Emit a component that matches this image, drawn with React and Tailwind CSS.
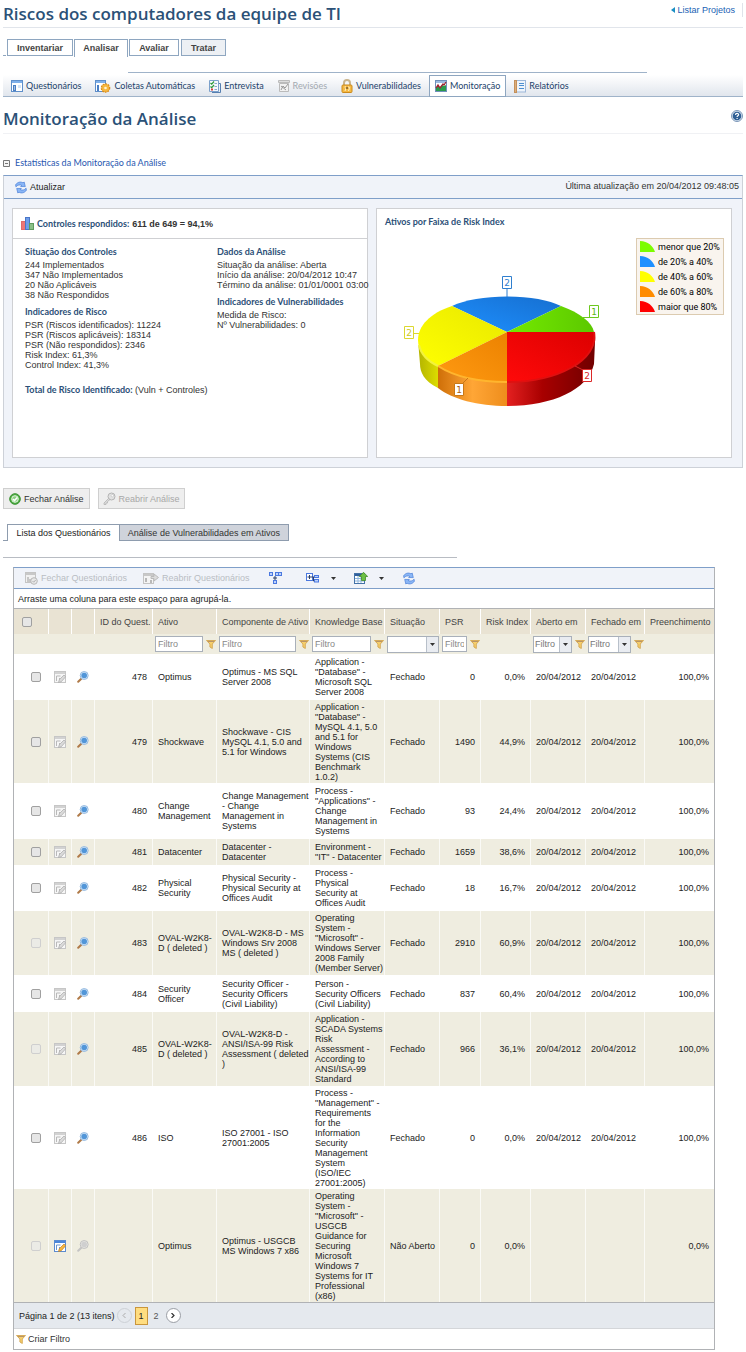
// Monitoração da Análise - project risk page (statistics + questionnaire grid)
import { useState } from 'react';

const OPEN = 'font-["Open_Sans",sans-serif]';
const LATO = 'font-["Lato",sans-serif]';

const controles = ['244 Implementados', '347 Não Implementados', '20 Não Aplicáveis', '38 Não Respondidos'];
const indicadores = [
  'PSR (Riscos identificados): 11224',
  'PSR (Riscos aplicáveis): 18314',
  'PSR (Não respondidos): 2346',
  'Risk Index: 61,3%',
  'Control Index: 41,3%',
];
const dadosAnalise = ['Situação da análise: Aberta', 'Início da análise: 20/04/2012 10:47', 'Término da análise: 01/01/0001 03:00'];
const vulnerabilidades = ['Medida de Risco:', 'Nº Vulnerabilidades: 0'];

const faixas = [
  { label: 'menor que 20%', color: '#7cfc00' },
  { label: 'de 20% a 40%', color: '#1e90ff' },
  { label: 'de 40% a 60%', color: '#ffff00' },
  { label: 'de 60% a 80%', color: '#ff8c00' },
  { label: 'maior que 80%', color: '#ff0000' },
];

const D = '20/04/2012';
const questionarios = [
  { id: '478', ativo: ['Optimus'], comp: ['Optimus - MS SQL', 'Server 2008'], kb: ['Application -', '"Database" -', 'Microsoft SQL', 'Server 2008'], psr: '0', risk: '0,0%', h: 'h-[46px]' },
  { id: '479', ativo: ['Shockwave'], comp: ['Shockwave - CIS', 'MySQL 4.1, 5.0 and', '5.1 for Windows'], kb: ['Application -', '"Database" -', 'MySQL 4.1, 5.0', 'and 5.1 for', 'Windows', 'Systems (CIS', 'Benchmark', '1.0.2)'], psr: '1490', risk: '44,9%', h: 'h-[83px]' },
  { id: '480', ativo: ['Change', 'Management'], comp: ['Change Management', '- Change', 'Management in', 'Systems'], kb: ['Process -', '"Applications" -', 'Change', 'Management in', 'Systems'], psr: '93', risk: '24,4%', h: 'h-[56px]' },
  { id: '481', ativo: ['Datacenter'], comp: ['Datacenter -', 'Datacenter'], kb: ['Environment -', '"IT" - Datacenter'], psr: '1659', risk: '38,6%', h: 'h-[26px]' },
  { id: '482', ativo: ['Physical', 'Security'], comp: ['Physical Security -', 'Physical Security at', 'Offices Audit'], kb: ['Process -', 'Physical', 'Security at', 'Offices Audit'], psr: '18', risk: '16,7%', h: 'h-[46px]' },
  { id: '483', ativo: ['OVAL-W2K8-', 'D ( deleted )'], comp: ['OVAL-W2K8-D - MS', 'Windows Srv 2008', 'MS ( deleted )'], kb: ['Operating', 'System -', '"Microsoft" -', 'Windows Server', '2008 Family', '(Member Server)'], psr: '2910', risk: '60,9%', h: 'h-[64px]', locked: true },
  { id: '484', ativo: ['Security', 'Officer'], comp: ['Security Officer -', 'Security Officers', '(Civil Liability)'], kb: ['Person -', 'Security Officers', '(Civil Liability)'], psr: '837', risk: '60,4%', h: 'h-[37px]' },
  { id: '485', ativo: ['OVAL-W2K8-', 'D ( deleted )'], comp: ['OVAL-W2K8-D -', 'ANSI/ISA-99 Risk', 'Assessment ( deleted', ')'], kb: ['Application -', 'SCADA Systems', 'Risk', 'Assessment -', 'According to', 'ANSI/ISA-99', 'Standard'], psr: '966', risk: '36,1%', h: 'h-[74px]', locked: true },
  { id: '486', ativo: ['ISO'], comp: ['ISO 27001 - ISO', '27001:2005'], kb: ['Process -', '"Management" -', 'Requirements', 'for the', 'Information', 'Security', 'Management', 'System', '(ISO/IEC', '27001:2005)'], psr: '0', risk: '0,0%', h: 'h-[103px]' },
  { id: '', ativo: ['Optimus'], comp: ['Optimus - USGCB', 'MS Windows 7 x86'], kb: ['Operating', 'System -', '"Microsoft" -', 'USGCB', 'Guidance for', 'Securing', 'Microsoft', 'Windows 7', 'Systems for IT', 'Professional', '(x86)'], psr: '0', risk: '0,0%', h: 'h-[113px]', locked: true, aberto: true },
];

/* ---------- icons ---------- */

function FormIcon() {
  return (
    <svg width="12" height="12" viewBox="0 0 12 12">
      <rect x="0.5" y="0.5" width="11" height="11" fill="#fff" stroke="#5f8fca" />
      <rect x="1" y="1" width="10" height="2" fill="#7fb0ea" />
      <rect x="2" y="5" width="3" height="6" fill="#4a7fc4" />
      <rect x="7" y="5" width="3" height="3" fill="#d5e4f6" />
      <path d="M3 7h1M3 9h1" stroke="#fff" />
    </svg>
  );
}

function FormGearIcon() {
  return (
    <svg width="16" height="13" viewBox="0 0 16 13">
      <rect x="0.5" y="0.5" width="10" height="11" fill="#fff" stroke="#5f8fca" />
      <rect x="1" y="1" width="9" height="2" fill="#7fb0ea" />
      <rect x="2" y="5" width="2" height="6" fill="#4a7fc4" />
      <circle cx="10.5" cy="8" r="4" fill="#f0a830" stroke="#d88a18" strokeDasharray="1.6 1" strokeWidth="1.6" />
      <circle cx="10.5" cy="8" r="3.4" fill="#f6b840" />
      <circle cx="10.5" cy="8" r="1.3" fill="#fff3d4" />
    </svg>
  );
}

function ChecklistIcon() {
  return (
    <svg width="12" height="13" viewBox="0 0 12 13">
      <path d="M10 3.500h1.500v9H3" fill="none" stroke="#567fb0" />
      <path d="M.5.500h9v11h-9z" fill="#f4f8fd" stroke="#7ba0cb" />
      <path d="M1.500 3l1.200 1.200L5 1.500M1.500 6.500l1.200 1.200L5 5" fill="none" stroke="#2f9a3c" strokeWidth="1.200" />
      <path d="M2 8.500h2v2H2z" fill="#d23c3c" />
      <path d="M5.500 3.500H8M5.500 6.500H8M5.500 9.500H8" stroke="#8aa6c8" />
    </svg>
  );
}

function ReviewIcon() {
  return (
    <svg width="12" height="12" viewBox="0 0 12 12">
      <path d="M.5.500h11v2H.5z" fill="#ddd" stroke="#bbb" />
      <path d="M1.500 3.500h9v8h-9z" fill="#f2f2f2" stroke="#bbb" />
      <path d="M3 10l2-4 2 2 3-4M3 6l5 4" fill="none" stroke="#999" />
    </svg>
  );
}

function LockIcon() {
  return (
    <svg width="12" height="14" viewBox="0 0 12 14">
      <path d="M3 7V4a3 3 0 0 1 6 0v3" fill="none" stroke="#c9b48c" strokeWidth="2" />
      <rect x="1" y="6" width="10" height="7.500" rx="1" fill="#f5b942" stroke="#cb8a1d" />
      <path d="M3.500 8c.8-1 2 0 1.600 1L4 12M7 8c1.500-.5 2 .6 1.400 1.500L7.500 12" fill="none" stroke="#fff1c9" />
      <circle cx="6" cy="9" r="1" fill="#7b5a22" />
    </svg>
  );
}

function MonitorIcon() {
  return (
    <svg width="12" height="12" viewBox="0 0 12 12">
      <rect x="0.5" y="0.5" width="11" height="11" fill="#fff" stroke="#6f8fba" />
      <rect x="1" y="1" width="10" height="2" fill="#9dbce2" />
      <path d="M1 11V8l2-2 2 2 2-3 2 1 2-1v6z" fill="#2a9a4c" />
      <path d="M1 8l2-3 2 3 3-4 1 1 2-3" fill="none" stroke="#9c2330" strokeWidth="1.300" />
    </svg>
  );
}

function NotebookIcon() {
  return (
    <svg width="12" height="13" viewBox="0 0 12 13">
      <rect x="2.500" y="0.500" width="9" height="11.500" fill="#eef4fb" stroke="#9db7d8" />
      <rect x="0.500" y="0.500" width="2" height="12" fill="#dcae7c" stroke="#c4905a" />
      <path d="M5 3.500h5M5 5.500h5M5 8.500h5" stroke="#4d8fd0" />
    </svg>
  );
}

function HelpIcon() {
  return (
    <svg width="12" height="12" viewBox="0 0 12 12">
      <circle cx="6" cy="6" r="5.500" fill="#dbe6f2" stroke="#7d98b8" />
      <circle cx="6" cy="6" r="4.300" fill="#2f5f94" />
      <path d="M4.500 4.900c0-2 3.100-1.900 3.100-.2 0 1.100-1.500 1.100-1.500 2.200M6.100 8v1.100" fill="none" stroke="#fff" strokeWidth="1.200" />
    </svg>
  );
}

function RefreshIcon() {
  return (
    <svg width="12" height="13" viewBox="0 0 12 13">
      <g fill="#8ab6f6" stroke="#4a7fd8" strokeWidth=".7" strokeLinejoin="round">
        <path d="M.6 3.800C2.500 1 5.500.4 8 1.800L9.200 1 10.300 5.600 5.600 5.500 6.800 4.400C4.800 3.500 2.800 3.800.9 5.800z" />
        <path d="M11.400 9.200C9.500 12 6.500 12.600 4 11.200L2.800 12 1.700 7.400 6.400 7.500 5.200 8.600C7.200 9.500 9.200 9.200 11.100 7.200z" />
      </g>
    </svg>
  );
}

function BarsIcon() {
  return (
    <svg width="13" height="13" viewBox="0 0 13 13">
      <rect x="0.500" y="4.500" width="4" height="8" fill="#ef7676" stroke="#e06a6a" />
      <rect x="4.500" y="0.500" width="4" height="12" fill="#6f9de8" stroke="#4a76c8" />
      <rect x="8.500" y="6.500" width="4" height="6" fill="#8abf86" stroke="#5f9a5d" />
    </svg>
  );
}

function CheckCircleIcon() {
  return (
    <svg width="12" height="12" viewBox="0 0 12 12">
      <circle cx="6" cy="6" r="5.300" fill="#4fae45" stroke="#38902f" />
      <circle cx="6" cy="6" r="3.300" fill="#8ed184" stroke="#e5f6e2" />
      <path d="M3.900 6l1.600 1.600 2.800-3.100" fill="none" stroke="#fff" strokeWidth="1.500" />
    </svg>
  );
}

function KeyIcon() {
  return (
    <svg width="13" height="13" viewBox="0 0 13 13">
      <circle cx="8.500" cy="4.500" r="3.500" fill="#e2e2e2" stroke="#b4b4b4" />
      <circle cx="9.300" cy="3.700" r="1.200" fill="#fff" stroke="#bbb" strokeWidth=".6" />
      <path d="M5.500 6.500L1 11v1.500h2V11h1.500V9.500L7 7.500z" fill="#dcdcdc" stroke="#b4b4b4" strokeWidth=".8" />
    </svg>
  );
}

function CloseFormIcon() {
  return (
    <svg width="13" height="13" viewBox="0 0 13 13">
      <rect x="0.500" y="0.500" width="10" height="10" fill="#f1f1f1" stroke="#c4c4c4" />
      <path d="M1 2h9" stroke="#c8c8c8" strokeWidth="2" />
      <path d="M3 5v5M5 7v3" stroke="#b8b8b8" strokeWidth="1.500" />
      <circle cx="9" cy="9" r="3.300" fill="#e8e8e8" stroke="#b8b8b8" />
      <path d="M7.500 9l1.200 1.200 2-2.200" fill="none" stroke="#b0b0b0" />
    </svg>
  );
}

function ReopenFormIcon() {
  return (
    <svg width="16" height="12" viewBox="0 0 16 12">
      <rect x="0.500" y="1.500" width="10" height="10" fill="#f4f4f4" stroke="#c4c4c4" />
      <path d="M1 3h9" stroke="#c8c8c8" strokeWidth="2" />
      <path d="M3 6v4M8 8v3" stroke="#b8b8b8" strokeWidth="2" />
      <path d="M8 4.500h3V2l4.500 3.500L11 9V6.500H8z" fill="#dcdcdc" stroke="#bababa" />
    </svg>
  );
}

function TreeIcon() {
  return (
    <svg width="13" height="13" viewBox="0 0 13 13">
      <path d="M6 4v4.500M4 6h4" fill="none" stroke="#2c3f66" />
      <g fill="#bcd2fb" stroke="#4a78e0">
        <rect x="0.500" y="0.500" width="3" height="3" />
        <rect x="6.500" y="0.500" width="3" height="3" />
        <rect x="9.500" y="0.500" width="3" height="3" />
        <rect x="4.500" y="8.500" width="3" height="3" />
      </g>
    </svg>
  );
}

function ExpandIcon() {
  return (
    <svg width="13" height="10" viewBox="0 0 13 10">
      <rect x="0.500" y="0.500" width="6" height="7" fill="#fff" stroke="#4a78e0" />
      <path d="M1.500 4h7M3.500 2v4M7.500 4v4h1" fill="none" stroke="#2c3f66" />
      <rect x="8.500" y="2.500" width="4" height="2" fill="#bcd2fb" stroke="#4a78e0" />
      <rect x="8.500" y="6.500" width="4" height="2.500" fill="#bcd2fb" stroke="#4a78e0" />
    </svg>
  );
}

function ExportIcon() {
  return (
    <svg width="14" height="12" viewBox="0 0 14 12">
      <rect x="0.500" y="1.500" width="10" height="10" fill="#fff" stroke="#4472a8" />
      <path d="M1 3h9" stroke="#2f5f9c" strokeWidth="2" />
      <path d="M1 6.500h9M1 9h9M4 4v7M7 4v7" stroke="#8db4dc" />
      <path d="M9.500.3L13.700 4.500H11.500v4h-4v-4H5.300z" fill="#6cc044" stroke="#3f8a2a" strokeWidth=".8" />
    </svg>
  );
}

function CaretIcon() {
  return (
    <svg width="5" height="3" viewBox="0 0 5 3">
      <path d="M0 0h5L2.500 3z" fill="#333" />
    </svg>
  );
}

function FunnelIcon() {
  return (
    <svg width="10" height="9" viewBox="0 0 10 9" className="shrink-0">
      <path d="M.5.500h9L6.300 4v4.500L3.900 7V4z" fill="#f6cf6c" stroke="#cf9f48" strokeWidth=".8" />
      <path d="M2 1.500h6" stroke="#b89468" />
    </svg>
  );
}

function EditIcon({ active }) {
  return (
    <svg width="12" height="12" viewBox="0 0 12 12" className="mx-auto">
      <rect x="0.500" y="0.500" width="11" height="11" fill={active ? '#fff' : '#f6f6f6'} stroke={active ? '#5b8bd0' : '#c6c6c6'} />
      <path d="M1 2h10" stroke={active ? '#4b86da' : '#d2d2d2'} strokeWidth="2" />
      <path d="M2.500 5h4M2.500 10V5M5.500 10V7" stroke={active ? '#6a95cf' : '#b9b9b9'} />
      <path d="M4.500 11.500l.8-2.800L10 4l1.700 1.700L7.300 10.700z" fill={active ? '#f6b640' : '#dadada'} stroke={active ? '#c07f20' : '#a9a9a9'} strokeWidth=".7" />
    </svg>
  );
}

function MagnifierIcon({ disabled }) {
  return (
    <svg width="12" height="12" viewBox="0 0 12 12" className="mx-auto">
      <path d="M1.200 10.800L4.800 7.200" stroke={disabled ? '#c4c4c4' : '#b07a48'} strokeWidth="2" strokeLinecap="round" />
      <circle cx="7.200" cy="4.500" r="4" fill={disabled ? '#e4e4e0' : '#d3e6f8'} stroke={disabled ? '#bdbdbd' : '#8db4dc'} strokeWidth=".9" />
      <circle cx="7.200" cy="4.500" r="2.800" fill={disabled ? '#cfcfcf' : '#5296d8'} />
    </svg>
  );
}

/* ---------- chart ---------- */

function RiskPie() {
  return (
    <svg width="200" height="136" viewBox="400 274 200 136" role="img" aria-label="Ativos por Faixa de Risk Index">
      <defs>
        <linearGradient id="sideRed" x1="0" x2="1">
          <stop offset="0" stopColor="#e42020" />
          <stop offset=".4" stopColor="#a80000" />
          <stop offset="1" stopColor="#700000" />
        </linearGradient>
        <linearGradient id="sideOrange" x1="0" x2="1">
          <stop offset="0" stopColor="#cf6f08" />
          <stop offset=".5" stopColor="#ffa636" />
          <stop offset="1" stopColor="#ee8d1c" />
        </linearGradient>
        <linearGradient id="sideYellow" x1="0" x2="1">
          <stop offset="0" stopColor="#b3b300" />
          <stop offset="1" stopColor="#dcdc00" />
        </linearGradient>
        <linearGradient id="topBlue" x1="0" y1="1" x2="1" y2="0">
          <stop offset="0" stopColor="#1e90ff" />
          <stop offset="1" stopColor="#166fd0" />
        </linearGradient>
        <linearGradient id="topGreen" x1="0" x2="1">
          <stop offset="0" stopColor="#74ea00" />
          <stop offset="1" stopColor="#5cc800" />
        </linearGradient>
        <linearGradient id="topYellow" x1="0" y1="1" x2="1" y2="0">
          <stop offset="0" stopColor="#ffff00" />
          <stop offset="1" stopColor="#e8e800" />
        </linearGradient>
        <linearGradient id="topOrange" x1="0" y1="1" x2="1" y2="0">
          <stop offset="0" stopColor="#ff9a12" />
          <stop offset="1" stopColor="#ec8200" />
        </linearGradient>
        <linearGradient id="topRed" x1="0" y1="1" x2="1" y2="0">
          <stop offset="0" stopColor="#ff0a0a" />
          <stop offset="1" stopColor="#dc0000" />
        </linearGradient>
      </defs>
      <path d="M418 340C418 350 424 360 438 366V388C424 381 420 372 420 364z" fill="url(#sideYellow)" />
      <path d="M438 366C455 377 480 382 507 382V406C478 406 452 399 438 388z" fill="url(#sideOrange)" />
      <path d="M507 380C545 378 590 362 593 332C595 334 595.500 337 595 342L594 364C588 390 552 406 507 406z" fill="url(#sideRed)" />
      <path d="M507 332L452 306C465 300 485 296.500 507 296.500S549 300 561 306z" fill="url(#topBlue)" />
      <path d="M507 332L561 306C580 313 592 322 594 332z" fill="url(#topGreen)" />
      <path d="M507 332L452 306C430 313 418 326 418 340C418 350 425 359 438 366z" fill="url(#topYellow)" />
      <path d="M507 332L438 366C455 377 480 382 507 382z" fill="url(#topOrange)" />
      <path d="M507 332H594C599 360 558 382 507 382z" fill="url(#topRed)" />
      <path d="M438 366C455 377 480 382 507 382" fill="none" stroke="#ffb52e" strokeWidth="2" />
      <path d="M507 382C558 382 599 360 594 332" fill="none" stroke="#e01010" strokeWidth="2" />
      <path d="M419 345C421 354 427 361 438 366" fill="none" stroke="#f2f23c" strokeWidth="2" />
      <g fill="#fff">
        <path d="M507 289v8M502.500 276.500h9v12h-9z" stroke="#2f7fcf" />
        <path d="M583 317.500h7M589.500 305.500h9v12h-9z" stroke="#6cc81e" />
        <path d="M413 333.500h6M404.500 326.500h9v12h-9z" stroke="#dcd830" />
        <path d="M463 383l5-5M454.500 383.500h9v12h-9z" stroke="#c87818" />
        <path d="M575 366l8 4M582.500 369.500h9v12h-9z" stroke="#dc2828" />
      </g>
      <g fontFamily="DejaVu Sans, sans-serif" fontSize="9" textAnchor="middle">
        <text x="507" y="286" fill="#2f7fcf">2</text>
        <text x="594" y="315" fill="#5cb812">1</text>
        <text x="409" y="336" fill="#cfca20">2</text>
        <text x="459" y="393" fill="#a86010">1</text>
        <text x="587" y="379" fill="#dc2828">2</text>
      </g>
    </svg>
  );
}

/* ---------- pieces ---------- */

function MenuItem({ icon, label, active, disabled }) {
  const tone = active ? 'border-[#8ea6c0] bg-white' : 'border-transparent';
  return (
    <button
      disabled={disabled}
      className={`flex h-[22px] items-center gap-[3px] border px-[5px] whitespace-nowrap ${tone} ${disabled ? 'text-[#a3a9b0]' : 'text-[#1d436b]'}`}
    >
      {icon}
      {label}
    </button>
  );
}

function StatBlock({ title, lines }) {
  return (
    <section className="mb-[4px]">
      <h3 className={`${LATO} text-[9px] leading-[16px] font-bold text-[#2b4f77]`}>{title}</h3>
      {lines.map(l => <p key={l} className="leading-[10px] whitespace-nowrap">{l}</p>)}
    </section>
  );
}

function FilterInput({ label }) {
  return (
    <div className="flex items-center gap-[3px] pl-[2px] pr-px">
      <input aria-label={label} placeholder="Filtro" className="h-[16px] w-full min-w-0 border border-[#a9b0ba] bg-white px-[2px] text-[9px] placeholder:text-[#888]" />
      <FunnelIcon />
    </div>
  );
}

function FilterSelect({ label, text, funnel }) {
  return (
    <div className="flex items-center gap-[3px] pl-[2px] pr-px">
      <div className="relative h-[17px] w-full min-w-0">
        <select aria-label={label} className="block h-full w-full appearance-none border border-[#a9b0ba] bg-white pl-px text-[9px] text-[#777]">
          <option>{text}</option>
        </select>
        <span className="pointer-events-none absolute inset-y-px right-px flex w-[12px] items-center justify-center border-l border-[#b8c0ca] bg-[#e9ecf1]">
          <CaretIcon />
        </span>
      </div>
      {funnel && <FunnelIcon />}
    </div>
  );
}

function Lines({ items }) {
  return items.map(t => <span key={t} className="block whitespace-nowrap">{t}</span>);
}

const CHECK = 'block size-[10px] appearance-none rounded-xs border border-[#a0a0a0] bg-[#e6e6e6] checked:bg-[#4b86da] disabled:border-[#cfcfcf] disabled:bg-[#ebebe6]';
const TH = 'border-r border-white px-[5px] font-normal whitespace-nowrap last:border-r-0';
const TD = 'border-r border-white/70 pl-[5px] pr-0 last:border-r-0';
const TDR = 'border-r border-white/70 px-[5px] text-right last:border-r-0';

function Grid() {
  const [marcados, setMarcados] = useState([]);

  function toggle(i) {
    setMarcados(prev => prev.includes(i) ? prev.filter(x => x !== i) : [...prev, i]);
  }

  return (
    <table className="w-full table-fixed border-separate border-spacing-0 text-left text-[9px] leading-[10px] text-[#222]">
      <colgroup>
        <col className="w-[35px]" />
        <col className="w-[23px]" />
        <col className="w-[23px]" />
        <col className="w-[58px]" />
        <col className="w-[64px]" />
        <col className="w-[93px]" />
        <col className="w-[75px]" />
        <col className="w-[55px]" />
        <col className="w-[41px]" />
        <col className="w-[50px]" />
        <col className="w-[55px]" />
        <col className="w-[59px]" />
        <col />
      </colgroup>
      <thead>
        <tr className="h-[25px] bg-[#e9e3d3] text-[#444]">
          <th className={TH}><input type="checkbox" aria-label="Selecionar todos" className={`${CHECK} ml-[3px]`} /></th>
          <th className={TH} />
          <th className={TH} />
          <th className={`${TH} text-right`}>ID do Quest.</th>
          <th className={TH}>Ativo</th>
          <th className={TH}>Componente de Ativo</th>
          <th className={TH}>Knowledge Base</th>
          <th className={TH}>Situação</th>
          <th className={TH}>PSR</th>
          <th className={`${TH} text-right`}>Risk Index</th>
          <th className={TH}>Aberto em</th>
          <th className={TH}>Fechado em</th>
          <th className={`${TH} text-right`}>Preenchimento</th>
        </tr>
        <tr className="h-[20px] bg-[#efede0]">
          <td colSpan={4} />
          <td><FilterInput label="Filtro de Ativo" /></td>
          <td><FilterInput label="Filtro de Componente de Ativo" /></td>
          <td><FilterInput label="Filtro de Knowledge Base" /></td>
          <td><FilterSelect label="Filtro de Situação" text="" /></td>
          <td><FilterInput label="Filtro de PSR" /></td>
          <td />
          <td><FilterSelect label="Filtro de Aberto em" text="Filtro" funnel /></td>
          <td><FilterSelect label="Filtro de Fechado em" text="Filtro" funnel /></td>
          <td />
        </tr>
      </thead>
      <tbody>
        {questionarios.map((q, i) => (
          <tr key={i} className={`${q.h} odd:bg-white even:bg-[#efede0]`}>
            <td className={TD}>
              <input type="checkbox" aria-label={`Selecionar ${q.id}`} disabled={q.locked} checked={marcados.includes(i)} onChange={() => toggle(i)} className={`${CHECK} ml-[12px]`} />
            </td>
            <td className="border-r border-white/70"><EditIcon active={q.aberto} /></td>
            <td className="border-r border-white/70"><MagnifierIcon disabled={q.aberto} /></td>
            <td className={TDR}>{q.id}</td>
            <td className={TD}><Lines items={q.ativo} /></td>
            <td className={TD}><Lines items={q.comp} /></td>
            <td className={TD}><Lines items={q.kb} /></td>
            <td className={TD}>{q.aberto ? 'Não Aberto' : 'Fechado'}</td>
            <td className={TDR}>{q.psr}</td>
            <td className={TDR}>{q.risk}</td>
            <td className={TD}>{q.aberto ? '' : D}</td>
            <td className={TD}>{q.aberto ? '' : D}</td>
            <td className={TDR}>{q.aberto ? '0,0%' : '100,0%'}</td>
          </tr>
        ))}
      </tbody>
    </table>
  );
}

export default function App() {
  return (
    <div className='bg-white px-[3px] pb-[2px] font-["Liberation_Sans",Arial,sans-serif] text-[9px] leading-[12px] text-[#333]'>
      <header className="flex h-[28px] items-center justify-between border-b border-[#e1e5eb]">
        <h1 className={`${OPEN} text-[17px] leading-[26px] font-semibold text-[#2b5177]`}>Riscos dos computadores da equipe de TI</h1>
        <div className="mb-[8px] flex h-[14px] items-center border-r border-[#dfe3ea] pr-[7px]">
          <a href="#projetos" className="flex items-center gap-[2px] text-[#1a5fb4]">
            <svg width="4" height="6" viewBox="0 0 4 6"><path d="M4 0v6L0 3z" fill="#1b8fc4" /></svg>
            Listar Projetos
          </a>
        </div>
      </header>

      <nav className="mt-[11px] flex h-[18px] items-start gap-px font-bold text-[#444]">
        <span className="h-[17px] w-[3px] border-b border-[#8ea6c0]" />
        <button className="h-[17px] w-[66px] border border-[#8ea6c0]">Inventariar</button>
        <button className="h-[18px] w-[54px] border border-b-0 border-[#8ea6c0] pb-[2px]">Analisar</button>
        <button className="h-[17px] w-[50px] border border-[#8ea6c0]">Avaliar</button>
        <button className="ml-px h-[17px] w-[45px] border border-[#8ea6c0] bg-[#edf0f4]">Tratar</button>
      </nav>

      <div className="mt-[15px] mr-[13%] ml-[125px] border-t border-[#9fb3c9]" />
      <nav className={`${LATO} mt-[2px] flex h-[22px] gap-[2px] border-b border-[#9fb3c9] bg-linear-to-b from-white to-[#e1e6ed] pl-[2px] text-[9px]`}>
        <MenuItem icon={<FormIcon />} label="Questionários" />
        <MenuItem icon={<FormGearIcon />} label="Coletas Automáticas" />
        <MenuItem icon={<ChecklistIcon />} label="Entrevista" />
        <MenuItem icon={<ReviewIcon />} label="Revisões" disabled />
        <MenuItem icon={<LockIcon />} label="Vulnerabilidades" />
        <MenuItem icon={<MonitorIcon />} label="Monitoração" active />
        <MenuItem icon={<NotebookIcon />} label="Relatórios" />
      </nav>

      <div className="mt-[8px] flex h-[29px] items-center justify-between border-b border-[#f0f1f4]">
        <h2 className={`${OPEN} text-[17px] leading-[26px] font-semibold text-[#2b5177]`}>Monitoração da Análise</h2>
        <button aria-label="Ajuda" className="mb-[6px]"><HelpIcon /></button>
      </div>

      <button className={`${LATO} mt-[22px] flex h-[14px] items-center gap-[5px] text-[#2858b0]`}>
        <svg width="7" height="7" viewBox="0 0 7 7"><path d="M.5.500h6v6h-6zM2 3.500h3" fill="#f4f4f4" stroke="#777" /></svg>
        Estatísticas da Monitoração da Análise
      </button>

      <section className="mt-[5px] border border-[#cdd1d8] border-t-[#7f9fc9] bg-[#f0f3f9]">
        <div className="flex h-[23px] items-center justify-between border-b border-[#7f9fc9] pr-[3px] pl-[11px]">
          <button className="flex items-center gap-[3px] text-[#222]"><RefreshIcon /> Atualizar</button>
          <span className="pb-[3px]">Última atualização em 20/04/2012 09:48:05</span>
        </div>
        <div className="grid grid-cols-2 gap-[8px] pt-[9px] pr-[10px] pb-[9px] pl-[8px]">
          <div className="h-[250px] border border-[#cfd0d3] bg-white">
            <div className="flex h-[30px] items-center gap-[3px] border-b border-[#cfd0d3] pl-[8px] font-bold">
              <BarsIcon />
              <span className={`${LATO} text-[#2b4f77]`}>Controles respondidos:</span>
              <span>611 de 649 = 94,1%</span>
            </div>
            <div className="grid grid-cols-[192px_1fr] pt-[5px] pl-[12px]">
              <div>
                <StatBlock title="Situação dos Controles" lines={controles} />
                <StatBlock title="Indicadores de Risco" lines={indicadores} />
              </div>
              <div>
                <StatBlock title="Dados da Análise" lines={dadosAnalise} />
                <StatBlock title="Indicadores de Vulnerabilidades" lines={vulnerabilidades} />
              </div>
              <p className="col-span-2 mt-[8px] leading-[16px]">
                <span className={`${LATO} font-bold text-[#2b4f77]`}>Total de Risco Identificado:</span> (Vuln + Controles)
              </p>
            </div>
          </div>
          <div className="h-[250px] border border-[#cfd0d3] bg-white pt-[5px] pr-[7px] pl-[8px]">
            <h3 className={`${LATO} leading-[16px] font-bold text-[#2b4f77]`}>Ativos por Faixa de Risk Index</h3>
            <div className="flex items-start justify-between pt-[8px] pl-[15px]">
              <div className="mt-[36px]"><RiskPie /></div>
              <ul className='w-[88px] shrink-0 border border-[#dccbb0] bg-[#f9f4ee] pl-[3px] font-["Roboto",sans-serif] text-[9px] text-black'>
                {faixas.map(f => (
                  <li key={f.label} className="flex h-[15px] items-center gap-[3px] whitespace-nowrap">
                    <svg width="15" height="11" viewBox="0 0 15 11" className="shrink-0"><path d="M0 0c8 0 13 5 15 11H0z" fill={f.color} /></svg>
                    {f.label}
                  </li>
                ))}
              </ul>
            </div>
          </div>
        </div>
      </section>

      <div className="mt-[20px] flex gap-[8px] text-[#333]">
        <button className="flex h-[21px] items-center gap-[3px] border border-[#cfcfcf] bg-[#eeeeee] px-[5px]"><CheckCircleIcon /> Fechar Análise</button>
        <button disabled className="flex h-[21px] items-center gap-[3px] border border-[#cfcfcf] bg-[#eeeeee] px-[4px] text-[#a8a8a8]"><KeyIcon /> Reabrir Análise</button>
      </div>

      <nav className="mt-[15px] flex h-[17px]">
        <span className="w-[4px] border-b border-[#8e9cae]" />
        <button className="w-[113px] border border-b-0 border-[#8e9cae] text-[#222]">Lista dos Questionários</button>
        <button className="w-[169px] border border-l-0 border-[#8e9cae] bg-[#cfd3db]">Análise de Vulnerabilidades em Ativos</button>
      </nav>

      <div className="mt-[16px] mr-[286px] border-t border-[#b8bcc3]" />

      <main className="mt-[9px] mr-[28px] ml-[10px] border border-[#b0b2b5] border-t-[#7f9fc9]">
        <div className="flex h-[21px] items-center border-b border-[#7f9fc9] bg-[#f0f3f9] pl-[11px]">
          <button disabled className="flex items-center gap-[3px] text-[#b9bdc3]"><CloseFormIcon /> Fechar Questionários</button>
          <button disabled className="ml-[16px] flex items-center gap-[3px] text-[#b9bdc3]"><ReopenFormIcon /> Reabrir Questionários</button>
          <button aria-label="Agrupar" className="ml-[19px]"><TreeIcon /></button>
          <button aria-label="Expandir" className="ml-[24px] flex items-center gap-[12px]"><ExpandIcon /><CaretIcon /></button>
          <button aria-label="Exportar" className="ml-[18px] flex items-center gap-[11px]"><ExportIcon /><CaretIcon /></button>
          <button aria-label="Atualizar lista" className="ml-[19px]"><RefreshIcon /></button>
        </div>
        <p className="flex h-[20px] items-center border-b border-[#b0b2b5] pl-[4px] text-[#222]">Arraste uma coluna para este espaço para agrupá-la.</p>
        <Grid />
        <div className="flex h-[27px] items-center border-t border-b border-[#b0b2b5] border-b-[#d4d6d9] bg-[#e5e9ee] pl-[5px] text-[#222]">
          <span>Página 1 de 2 (13 itens)</span>
          <button disabled aria-label="Página anterior" className="ml-[2px] grid size-[15px] place-items-center rounded-full border border-[#cdd1d6]">
            <svg width="4" height="5" viewBox="0 0 4 5"><path d="M3.500 0L1 2.500 3.500 5" fill="none" stroke="#aaa" /></svg>
          </button>
          <button className="ml-[3px] h-[18px] w-[13px] border border-[#c9963c] bg-[#ffdd80]">1</button>
          <button className="ml-[2px] h-[18px] w-[13px] text-[#555]">2</button>
          <button aria-label="Próxima página" className="ml-[3px] grid size-[15px] place-items-center rounded-full border border-[#9a9ea5] bg-white">
            <svg width="4" height="5" viewBox="0 0 4 5"><path d="M.5 0L3 2.500.5 5" fill="none" stroke="#333" strokeWidth="1.200" /></svg>
          </button>
        </div>
        <div className="flex h-[20px] items-center pl-[2px]">
          <button className="flex items-center gap-[2px]"><FunnelIcon /> Criar Filtro</button>
        </div>
      </main>
    </div>
  );
}
